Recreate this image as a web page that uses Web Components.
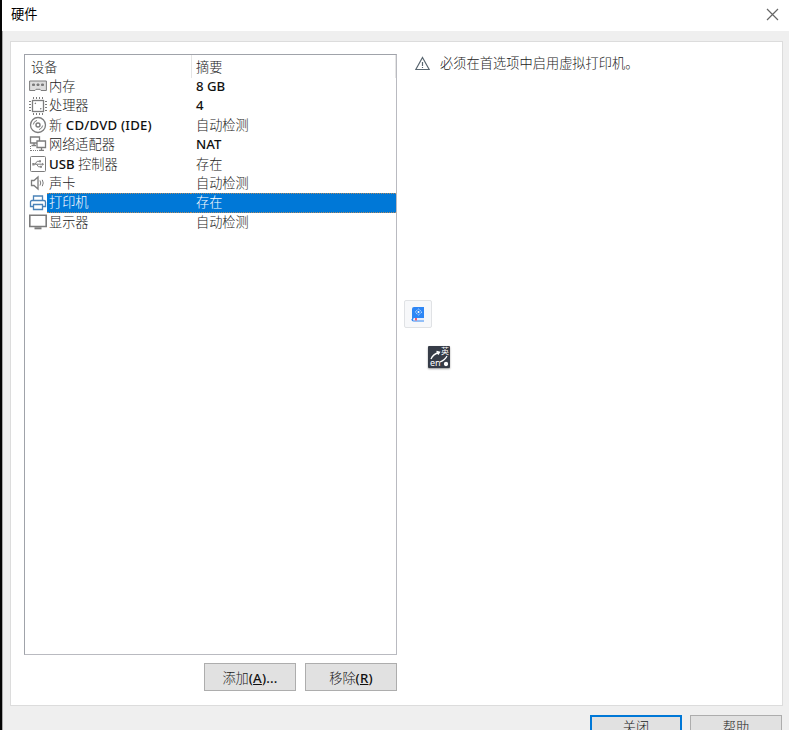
<!DOCTYPE html>
<html lang="zh-CN">
<head>
<meta charset="utf-8">
<title>硬件</title>
<style>
html,body{margin:0;height:100%;overflow:hidden}
body{font:300 13.2px/19px "Noto Sans CJK SC",sans-serif;color:#222}
</style>
</head>
<body>
<hw-dialog></hw-dialog>
<script>
const define = (name, html) => {
  const t = document.createElement('template');
  t.innerHTML = html;
  customElements.define(name, class extends HTMLElement {
    constructor() {
      super();
      this.attachShadow({mode: 'open'}).append(t.content.cloneNode(true));
    }
  });
};

const icons = {
  memory: '<path d="M.6 4h16.800v9.500h-5.400l-1-1.200h-4l-1 1.200H.6z" fill="#ddd"/><path d="M3.500 7h2v1.500h-2zM8 7h2v1.500H8zM12.500 7h2v1.500h-2z" fill="#777"/>',
  cpu: '<rect x="3.500" y="3.500" width="11" height="11" stroke-width="1.300"/><path d="M4.500 0v2M7.500 0v2M10.500 0v2M13.500 0v2M4.500 16v2M7.500 16v2M10.500 16v2M13.500 16v2M0 4.500h2M0 7.500h2M0 10.500h2M0 13.500h2M16 4.500h2M16 7.500h2M16 10.500h2M16 13.500h2"/><path d="M6 6h.6v.6H6zM11.500 11.500h.6v.6h-.6z" fill="#777"/>',
  disc: '<circle cx="9" cy="9" r="7.500" stroke-width="1.300"/><circle cx="9" cy="9" r="2" stroke-width="1.400"/><path d="M4.300 8.500q.4-3.200 3.700-4.100M13.700 9.500q-.5 3-3.600 4.100"/>',
  net: '<g stroke-width="1.300"><path d="M1.500 2h9v6h-9zM5 8v2.500M2.500 10.500H7"/><path d="M8 6h8.500v6.500H8z" fill="#fff"/><path d="M12.500 12.500V15M10 15.300h5"/></g><path d="M1.500 11v5M2 15.500h7" stroke-dasharray="1 1"/>',
  usb: '<rect x="1.500" y="1.500" width="15" height="15" rx="1"/><path d="M4 9.200h10M6 9l2.200-2.700h2M7.500 9.200l2 2.600h2"/><path d="M3.300 8h2.200v2.400H3.300zM10 5.200h2v2h-2zM11 10.800h2v2h-2zM13 7.700l2.200 1.500-2.200 1.500z" fill="#888" stroke="none"/>',
  sound: '<path d="M2.500 6.500h2.500l4-3.500v12l-4-3.500H2.500z" stroke-width="1.300"/><path d="M11 6.500q1.500 2.500 0 5M13.300 5.800q1.800 3.200 0 6.400"/>',
  printer: '<g stroke="#4a82b8" stroke-width="1.300"><path d="M4.500 6V2h9v4M4.500 12.500H1.500V8q0-1.500 1.500-1.500h12q1.500 0 1.500 1.500v4.500h-3"/><path d="M4.500 10.500h9v5h-9z" fill="#fff"/></g>',
  display: '<path d="M.8 2.200h16.400v11.300H.8z" stroke-width="1.600"/><path d="M5.500 15.300h7" stroke-width="2"/>'
};
customElements.define('device-icon', class extends HTMLElement {
  connectedCallback() {
    this.attachShadow({mode: 'open'}).innerHTML =
      `<style>:host{display:block;width:18px;height:18px}svg{display:block}</style><svg width="18" height="18" viewBox="0 0 18 18" fill="none" stroke="#7c7c7c">${icons[this.getAttribute('name')]}</svg>`;
  }
});

define('latin-text', `<style>:host{font-family:"Noto Sans","DejaVu Sans",sans-serif;font-weight:500;font-size:13.200px;line-height:1;letter-spacing:var(--track,0);color:#111}</style><slot></slot>`);

define('device-row', `<style>
:host{display:grid;grid-template-columns:22px 144px 1fr;height:19.400px;align-items:center;line-height:17px;white-space:nowrap}
.icon{padding-left:4px;margin-top:-1px}
.name,.sum{height:100%;padding-left:2px;box-sizing:border-box}
.sum{padding-left:5px}
:host([selected]) .name,:host([selected]) .sum{background:#0078d7;color:#fff;border:dotted #b08a60;border-width:1px 0;line-height:16px}
</style><div class="icon"><slot name="icon"></slot></div><div class="name"><slot></slot></div><div class="sum"><slot name="summary"></slot></div>`);

define('device-list', `<style>
:host{display:block;box-sizing:border-box;width:373px;height:601px;border:1px solid #a0a3aa;border-right-color:#b9bac0;border-bottom-color:#b9bac0;background:#fff}
header{display:grid;grid-template-columns:167px 1fr;height:22px;line-height:23px}
header span{padding-left:6px;border-right:1px solid #e5e5e5}
header span+span{padding-left:4px}
</style><header><span>设备</span><span>摘要</span></header><slot></slot>`);

define('push-button', `<style>
:host{display:flex;align-items:center;justify-content:center;box-sizing:border-box;width:92px;height:28px;border:1px solid #adadad;background:#e1e1e1}
:host([primary]){border:2px solid #0078d7}
</style><slot></slot>`);

define('title-bar', `<style>
:host{display:flex;justify-content:space-between;height:31px;background:#fff;padding:0 10px 0 9px;font-weight:400;color:#000;line-height:27px}
svg{margin-top:8px}
</style><slot></slot><svg width="13" height="13" fill="none" stroke="#666" stroke-width="1.200"><path d="M1 1l11 11M12 1L1 12"/></svg>`);

define('floating-tools', `<style>
:host{position:absolute;left:402px;top:300px}
.book{box-sizing:border-box;width:28px;height:28px;border:1px solid #e0e2e5;background:#f7f8fa;border-radius:2px;display:grid;place-items:center}
.lang{position:absolute;left:24px;top:46px;width:22px;height:22px;background:#363c47;border-radius:1px;color:#fff;box-shadow:0 1px 2px #999}
.lang svg{position:absolute}
.zh,.en{position:absolute;line-height:8px}
.zh{font-size:8px;right:1px;top:1px;font-weight:400}
.en{font:9px/9px "Noto Sans",sans-serif;left:2px;bottom:1px}
</style>
<div class="book"><svg width="14" height="16"><path d="M1 3q0-2 2-2h10v12H3q-1 0-1 1t1 1H1z" fill="#2e86f5"/><path d="M2.500 12H13v2H2.500z" fill="#e8eefb"/><path d="M1 13v1q0 1 1.500 1H13" fill="none" stroke="#2e86f5"/><path d="M4 12h2v3l-1-1-1 1z" fill="#f05a6e"/><path d="M7.500 3l3.500 3-3.500 3L4 6z" fill="none" stroke="#bcdcff" stroke-dasharray="1.500 .7"/><circle cx="7.500" cy="6" r="1" fill="#fff"/></svg></div>
<div class="lang"><svg width="22" height="22" fill="none" stroke="#fff" stroke-width="1.300"><path d="M3 13Q5 8 11 6.500M8.500 5.500l3 .7-1.500 2.500M12 16Q17 14 19 10"/><circle cx="18" cy="18" r="1.500" fill="#fff"/></svg><span class="zh">英</span><span class="en">en</span></div>`);

define('hw-dialog', `<style>
:host{display:block;position:relative;box-sizing:border-box;width:789px;height:730px;overflow:hidden;background:#efefef;border-left:2px solid #050505;box-shadow:inset 1px 0 #aaa}
.panel{display:grid;grid-template-columns:373px 1fr;column-gap:18px;box-sizing:border-box;width:773px;height:665px;margin:10px 0 0 8px;padding:12px 13px 13px;border:1px solid #dcdcdc;background:#fff}
.actions{display:flex;justify-content:flex-end;gap:9px;padding-top:8px}
.notice{display:flex;align-items:flex-start;gap:10px;line-height:17px;letter-spacing:.05px}
.notice svg{margin-top:2px;flex:none}
.footer{display:flex;justify-content:flex-end;gap:8px;padding:9px 7px 0 0}
.footer push-button{line-height:15px;align-items:flex-start;padding-top:3px}
.footer push-button[primary]{padding-top:2px}
</style>
<title-bar>硬件</title-bar>
<div class="panel">
<div><device-list>
<device-row><device-icon slot="icon" name="memory"></device-icon>内存<latin-text slot="summary">8 GB</latin-text></device-row>
<device-row><device-icon slot="icon" name="cpu"></device-icon>处理器<latin-text slot="summary">4</latin-text></device-row>
<device-row><device-icon slot="icon" name="disc"></device-icon>新<latin-text style="--track:.2px"> CD/DVD (IDE)</latin-text><span slot="summary">自动检测</span></device-row>
<device-row><device-icon slot="icon" name="net"></device-icon>网络适配器<latin-text slot="summary">NAT</latin-text></device-row>
<device-row><device-icon slot="icon" name="usb"></device-icon><latin-text>USB </latin-text>控制器<span slot="summary">存在</span></device-row>
<device-row><device-icon slot="icon" name="sound"></device-icon>声卡<span slot="summary">自动检测</span></device-row>
<device-row selected><device-icon slot="icon" name="printer"></device-icon>打印机<span slot="summary">存在</span></device-row>
<device-row><device-icon slot="icon" name="display"></device-icon>显示器<span slot="summary">自动检测</span></device-row>
</device-list>
<div class="actions"><push-button><span>添加<latin-text style="--track:.2px">(<u>A</u>)...</latin-text></span></push-button><push-button><span>移除<latin-text style="--track:.2px">(<u>R</u>)</latin-text></span></push-button></div></div>
<div class="notice"><svg width="15" height="15" fill="none" stroke="#596670" stroke-width="1.200"><path d="M7.500 1.500l6.700 12H.8zM7.500 6v4M7.500 11v1"/></svg><span>必须在首选项中启用虚拟打印机。</span></div>
</div>
<div class="footer"><push-button primary>关闭</push-button><push-button>帮助</push-button></div>
<floating-tools></floating-tools>`);
</script>
</body>
</html>
